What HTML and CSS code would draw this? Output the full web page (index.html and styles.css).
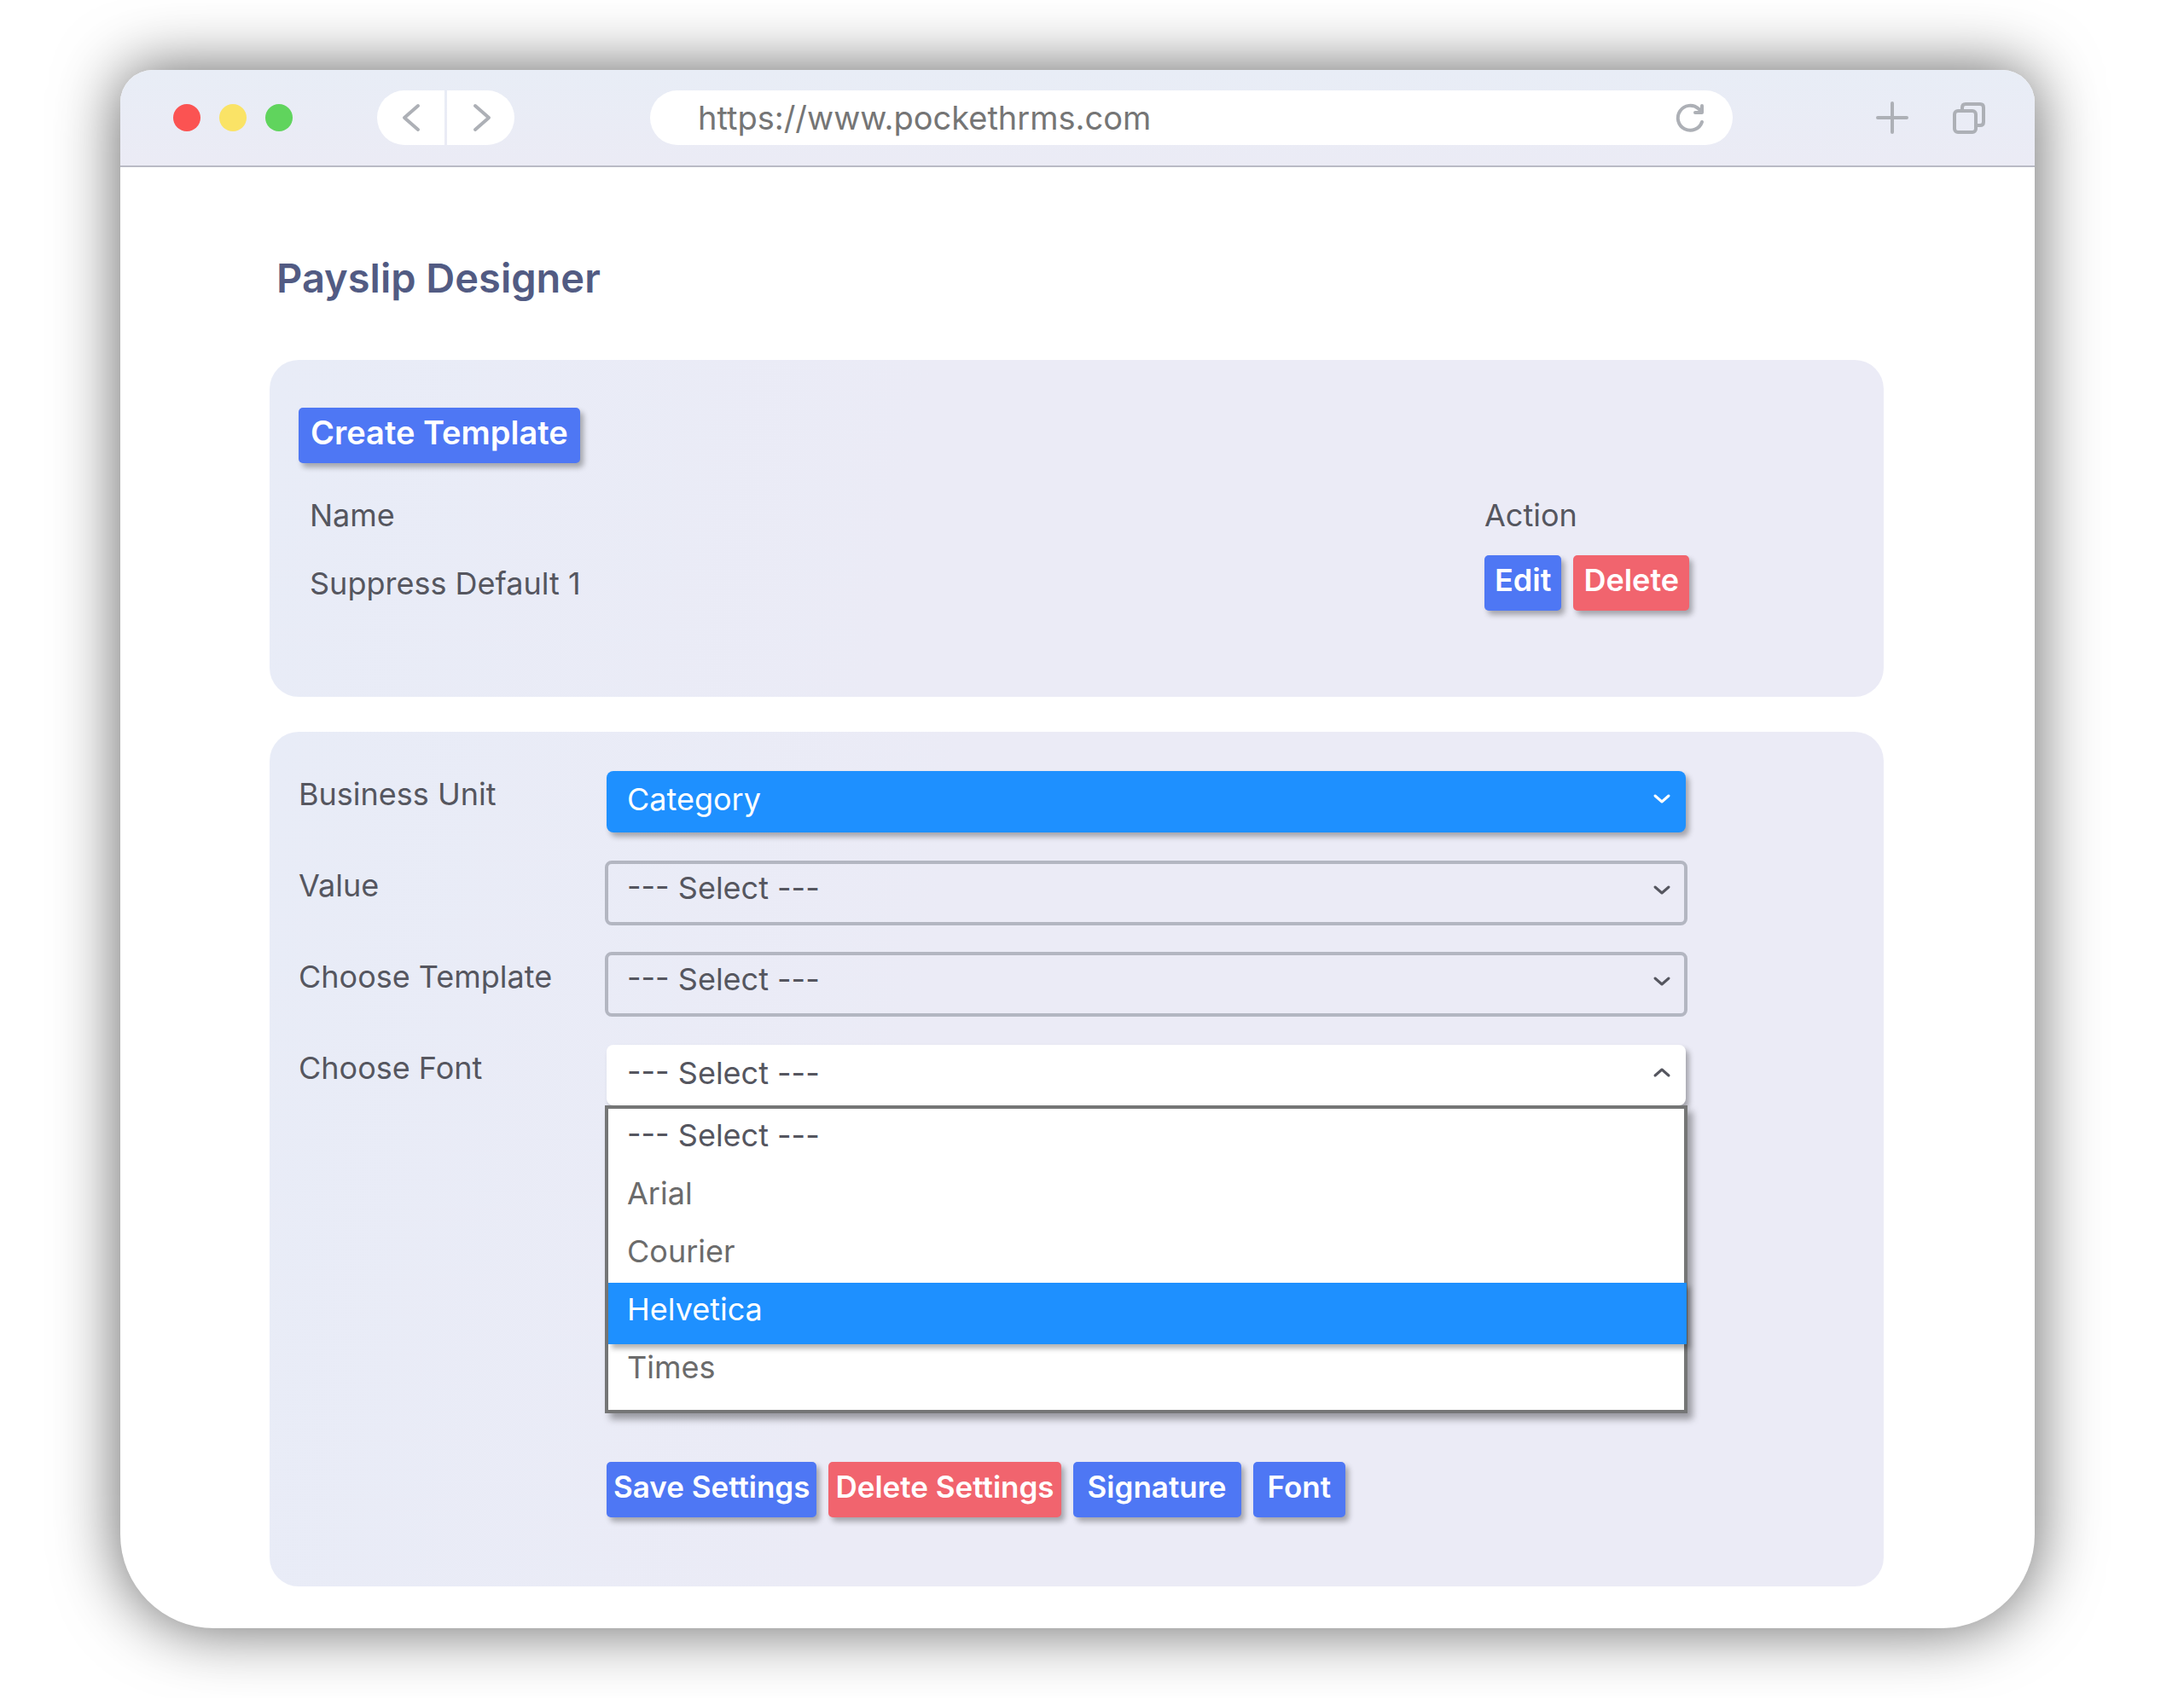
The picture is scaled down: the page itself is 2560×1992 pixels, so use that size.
FILE: index.html
```html
<!DOCTYPE html>
<html lang="en">
<head>
  <meta charset="UTF-8">
  <title>Payslip Designer</title>
  <link rel="stylesheet" href="styles.css">
</head>
<body>
  <div class="window">
    <header class="toolbar">
      <div class="dots">
        <span class="dot red"></span>
        <span class="dot yellow"></span>
        <span class="dot green"></span>
      </div>
      <div class="history">
        <button type="button" aria-label="Back">
          <svg width="40" height="40" viewBox="0 0 40 40"><path d="M28 6 L12 20 L28 34"/></svg>
        </button>
        <button type="button" aria-label="Forward">
          <svg width="40" height="40" viewBox="0 0 40 40"><path d="M13 6 L29 20 L13 34"/></svg>
        </button>
      </div>
      <div class="address">
        <input type="text" aria-label="Address" value="https://www.pockethrms.com">
        <button type="button" aria-label="Reload">
          <svg width="40" height="40" viewBox="0 0 40 40"><path d="M34 25 A14.5 14.5 0 1 1 30 9.5 L34 13 M34 6 V14 H26"/></svg>
        </button>
      </div>
      <div class="tools">
        <button type="button" aria-label="New tab">
          <svg width="40" height="40" viewBox="0 0 40 40"><path d="M20 3 V37 M3 20 H37"/></svg>
        </button>
        <button type="button" aria-label="Show tabs">
          <svg width="40" height="40" viewBox="0 0 40 40"><rect x="3" y="12" width="25" height="25" rx="4"/><path d="M12 11 V8 Q12 4 16 4 H33 Q37 4 37 8 V25 Q37 29 33 29 H29"/></svg>
        </button>
      </div>
    </header>

    <main class="content">
      <h1>Payslip Designer</h1>

      <section class="card templates">
        <button type="button" class="btn large">Create Template</button>
        <table>
          <thead>
            <tr><th>Name</th><th class="action">Action</th></tr>
          </thead>
          <tbody>
            <tr>
              <td>Suppress Default 1</td>
              <td class="action">
                <div class="buttons">
                  <button type="button" class="btn">Edit</button>
                  <button type="button" class="btn danger">Delete</button>
                </div>
              </td>
            </tr>
          </tbody>
        </table>
      </section>

      <form class="card settings">
        <label for="unit">Business Unit</label>
        <div class="field">
          <select id="unit" class="filled"><option>Category</option></select>
          <svg class="light" width="30" height="30" viewBox="0 0 30 30"><path d="M7 11 L15 18 L23 11"/></svg>
        </div>

        <label for="value">Value</label>
        <div class="field">
          <select id="value"><option>--- Select ---</option></select>
          <svg width="30" height="30" viewBox="0 0 30 30"><path d="M7 11 L15 18 L23 11"/></svg>
        </div>

        <label for="template">Choose Template</label>
        <div class="field">
          <select id="template"><option>--- Select ---</option></select>
          <svg width="30" height="30" viewBox="0 0 30 30"><path d="M7 11 L15 18 L23 11"/></svg>
        </div>

        <label for="font">Choose Font</label>
        <div class="field">
          <select id="font" class="filled open"><option>--- Select ---</option></select>
          <svg width="30" height="30" viewBox="0 0 30 30"><path d="M7 18 L15 11 L23 18"/></svg>
          <ul class="options" role="listbox" aria-label="Choose Font">
            <li class="first" role="option">--- Select ---</li>
            <li role="option">Arial</li>
            <li role="option">Courier</li>
            <li class="active" role="option" aria-selected="true">Helvetica</li>
            <li role="option">Times</li>
          </ul>
        </div>

        <div class="buttons form-buttons">
          <button type="button" class="btn">Save Settings</button>
          <button type="button" class="btn danger">Delete Settings</button>
          <button type="button" class="btn roomy">Signature</button>
          <button type="button" class="btn roomy">Font</button>
        </div>
      </form>
    </main>
  </div>
</body>
</html>
```
FILE: styles.css
```css
* {
  box-sizing: border-box;
}
body {
  margin: 0;
  padding: 82px 175px 82px 141px;
  background: #fff;
  color: #55565f;
  font-family: Inter, sans-serif;
  font-size: 36px;
}
button, input, select {
  font: inherit;
  color: inherit;
}
button {
  border: none;
  padding: 0;
  background: none;
  cursor: pointer;
}
svg {
  display: block;
  fill: none;
  stroke: #adb0b6;
  stroke-width: 4;
  stroke-linecap: round;
  stroke-linejoin: round;
}
.window {
  background: #fff;
  border-radius: 38px 38px 110px 110px;
  box-shadow: 0 0 76px rgba(0, 0, 0, 0.62);
}

/* browser bar */
.toolbar {
  display: flex;
  align-items: center;
  height: 114px;
  padding: 0 57px 0 62px;
  border-bottom: 2px solid #b9bac5;
  border-radius: 38px 38px 0 0;
  background: linear-gradient(#e8edf6, #ebebf5);
}
.dots {
  display: flex;
  gap: 22px;
}
.dot {
  width: 32px;
  height: 32px;
  border-radius: 50%;
}
.red {
  background: #fb5352;
}
.yellow {
  background: #fae366;
}
.green {
  background: #60d45d;
}
.history {
  display: flex;
  gap: 3px;
  margin-left: 99px;
}
.history button {
  display: flex;
  align-items: center;
  justify-content: center;
  width: 79px;
  height: 64px;
  background: #fff;
  border-radius: 32px 0 0 32px;
}
.history button + button {
  border-radius: 0 32px 32px 0;
}
.address {
  flex: 1;
  display: flex;
  align-items: center;
  height: 64px;
  margin: 0 167px 0 159px;
  padding: 0 30px 0 56px;
  border-radius: 32px;
  background: #fff;
}
.address input {
  flex: 1;
  min-width: 0;
  border: none;
  padding: 0;
  background: none;
  color: #757575;
  font-size: 38px;
}
.tools {
  display: flex;
  gap: 50px;
}

/* page */
.content {
  padding: 97px 177px 49px 175px;
}
h1 {
  margin: 0 0 63px;
  padding-left: 8px;
  color: #525b83;
  font-size: 47px;
  font-weight: 600;
  line-height: 66px;
}
.card {
  padding-left: 34px;
  padding-right: 34px;
  background: linear-gradient(100deg, #e8ecf7, #ebebf6 40%);
  border-radius: 34px;
}
.btn {
  height: 65px;
  padding: 0 12px 8px;
  border-radius: 5px;
  background: #4e77f4;
  color: #fff;
  font-weight: 600;
  box-shadow: 4px 5px 6px rgba(0, 0, 0, 0.3);
}
.large {
  padding: 0 14px 8px;
  font-size: 38px;
}
.danger {
  background: #f1646e;
}
.buttons {
  display: flex;
  gap: 14px;
}
.templates {
  padding-top: 56px;
  padding-bottom: 90px;
}
table {
  width: 100%;
  margin-top: 24px;
  border-collapse: collapse;
}
th, td {
  padding: 0 0 0 13px;
  text-align: left;
  font-weight: 400;
}
th {
  height: 73px;
}
td {
  height: 87px;
}
.action {
  width: 434px;
  padding-left: 0;
}

/* settings form */
.settings {
  display: grid;
  grid-template-columns: 359px 1fr;
  row-gap: 31px;
  margin-top: 41px;
  padding-top: 44px;
  padding-right: 230px;
  padding-bottom: 81px;
}
.settings label {
  line-height: 58px;
}
.field {
  position: relative;
}
.field svg {
  position: absolute;
  top: 20px;
  right: 15px;
  stroke: #55565f;
  stroke-width: 3;
}
.field .light {
  stroke: #fff;
}
select {
  display: block;
  appearance: none;
  width: 100%;
  height: 76px;
  padding: 0 60px 12px 22px;
  border: 4px solid #b3b6c1;
  border-radius: 8px;
  background: none;
}
.filled {
  width: calc(100% - 4px);
  height: 72px;
  margin: 2px;
  padding: 0 60px 6px 24px;
  border: none;
  background: #1e90ff;
  color: #fff;
  box-shadow: 4px 5px 6px rgba(0, 0, 0, 0.3);
}
.open {
  height: 71px;
  margin-bottom: 0;
  background: #fff;
  color: #55565f;
}
.options {
  margin: 0;
  padding: 0 0 13px;
  border: 4px solid #757676;
  background: #fff;
  color: #6b6b6b;
  list-style: none;
  box-shadow: 6px 7px 8px rgba(0, 0, 0, 0.35);
}
.options li {
  height: 68px;
  padding-left: 22px;
  line-height: 62px;
}
.options .first {
  color: #55565f;
}
.options .active {
  height: 72px;
  margin: 0 -3px -4px 0;
  background: #1e90ff;
  color: #fff;
  box-shadow: 4px 5px 6px rgba(0, 0, 0, 0.3);
}
.form-buttons {
  grid-column: 2;
  margin-top: 26px;
  padding-left: 2px;
}
.form-buttons .btn {
  padding: 0 8px 8px;
  font-size: 35px;
}
.form-buttons .roomy {
  padding: 0 17px 8px;
}
```
